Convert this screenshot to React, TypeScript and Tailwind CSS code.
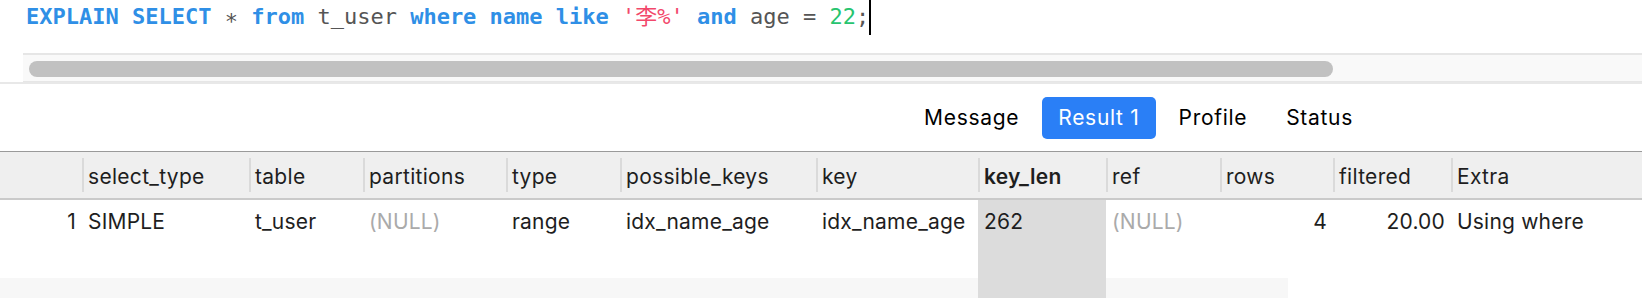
const columns = [
  { key: "id", title: "", width: 82 },
  { key: "select_type", title: "select_type", width: 167 },
  { key: "table", title: "table", width: 114 },
  { key: "partitions", title: "partitions", width: 143 },
  { key: "type", title: "type", width: 114 },
  { key: "possible_keys", title: "possible_keys", width: 196 },
  { key: "key", title: "key", width: 162 },
  { key: "key_len", title: "key_len", width: 128 },
  { key: "ref", title: "ref", width: 114 },
  { key: "rows", title: "rows", width: 113 },
  { key: "filtered", title: "filtered", width: 118 },
  { key: "Extra", title: "Extra", width: 191 },
];

type Cell = { text: string; muted?: boolean; right?: boolean };

const row: Record<string, Cell> = {
  id: { text: "1", right: true },
  select_type: { text: "SIMPLE" },
  table: { text: "t_user" },
  partitions: { text: "(NULL)", muted: true },
  type: { text: "range" },
  possible_keys: { text: "idx_name_age" },
  key: { text: "idx_name_age" },
  key_len: { text: "262" },
  ref: { text: "(NULL)", muted: true },
  rows: { text: "4", right: true },
  filtered: { text: "20.00", right: true },
  Extra: { text: "Using where" },
};

const tabs = ["Message", "Result 1", "Profile", "Status"];

const ui = { fontFamily: 'Inter, "Noto Sans", "Liberation Sans", sans-serif' };
const mono = {
  fontFamily: '"DejaVu Sans Mono", "Noto Sans CJK SC", monospace',
};

export default function App() {
  return (
    <div className="w-[1642px] h-[299px] bg-white overflow-hidden" style={ui}>
      {/* Query editor */}
      <div className="h-[53px] pl-[26px] flex items-start" style={mono}>
        <div className="pt-[3px] text-[22px] leading-[28px] whitespace-pre text-[#555555]">
          <span className="font-bold text-[#2f8fe6]">EXPLAIN SELECT</span>{" "}
          <span className="relative top-[5px]">*</span>{" "}
          <span className="font-bold text-[#2f8fe6]">from</span>
          {" t_user "}
          <span className="font-bold text-[#2f8fe6]">where name like</span>{" "}
          <span className="text-[#f2486b]">'李%'</span>{" "}
          <span className="font-bold text-[#2f8fe6]">and</span>
          {" age = "}
          <span className="text-[#27c46f]">22</span>;
        </div>
        <div className="w-[2px] h-[35px] bg-black" />
      </div>

      {/* Horizontal scrollbar */}
      <div className="flex h-[31px] border-b-2 border-[#e8e8e8]">
        <div className="w-[23px]" />
        <div className="flex-1 bg-[#f9f9f9] border-t-2 border-b border-[#e6e6e6] pl-[6px] pt-[6px]">
          <div className="w-[1304px] h-[16px] rounded-full bg-[#c1c1c1]" />
        </div>
      </div>

      {/* Result tabs */}
      <div className="h-[67px] flex items-center justify-end pr-[273px] gap-[7px] text-[21px] tracking-[0.7px] text-black">
        {tabs.map((t) => (
          <div
            key={t}
            className={
              t === "Result 1"
                ? "h-[42px] px-[16px] flex items-center rounded-[5px] bg-[#2a7ff6] text-white"
                : "h-[42px] px-[16px] flex items-center"
            }
          >
            {t}
          </div>
        ))}
      </div>

      {/* Grid header */}
      <div className="flex h-[49px] bg-[#efefef] border-t border-[#9a9a9a] border-b-2 border-b-[#cacaca] text-[21px] tracking-[0.3px] text-[#1e1e1e]">
        {columns.map((c, i) => (
          <div
            key={c.key}
            className="flex items-center shrink-0"
            style={{ width: c.width }}
          >
            {i > 0 && <div className="w-[2px] h-[34px] bg-[#dadada]" />}
            <span
              className={
                c.key === "key_len"
                  ? "ml-[4px] pt-[3px] font-semibold"
                  : "ml-[4px] pt-[3px]"
              }
            >
              {c.title}
            </span>
          </div>
        ))}
      </div>

      {/* Data row */}
      <div className="flex h-[78px] text-[21px] tracking-[0.2px] text-[#1e1e1e]">
        {columns.map((c) => {
          const cell = row[c.key];
          return (
            <div
              key={c.key}
              className={
                "shrink-0 pt-[6px] px-[6px] " +
                (c.key === "key_len" ? "bg-[#dcdcdc] " : "") +
                (cell.right ? "text-right " : "") +
                (cell.muted ? "text-[#aaaaaa]" : "")
              }
              style={{ width: c.width }}
            >
              {cell.text}
            </div>
          );
        })}
      </div>

      {/* Empty striped row */}
      <div className="flex h-[20px]">
        <div className="w-[978px] bg-[#f7f7f7]" />
        <div className="w-[128px] bg-[#dcdcdc]" />
        <div className="w-[182px] bg-[#f7f7f7]" />
      </div>
    </div>
  );
}
